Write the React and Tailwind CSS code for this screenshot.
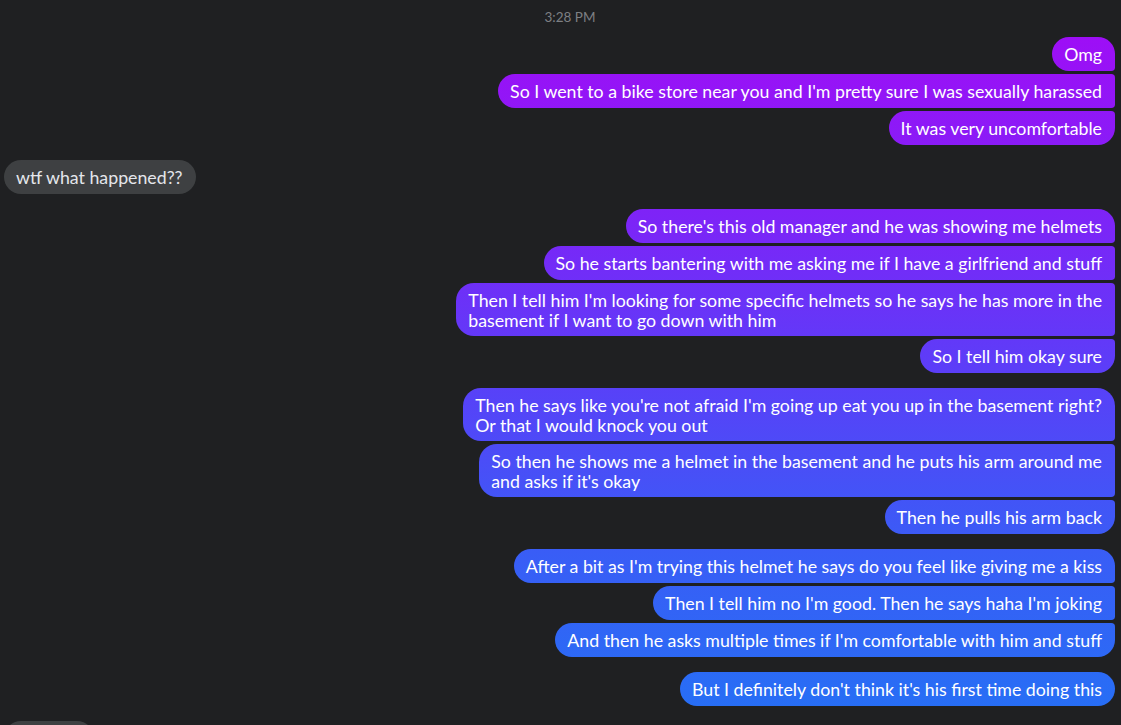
const groups = [
  {
    side: "me",
    items: [["Omg"], ["So I went to a bike store near you and I'm pretty sure I was sexually harassed"], ["It was very uncomfortable"]],
  },
  { side: "them", items: [["wtf what happened??"]] },
  {
    side: "me",
    items: [
      ["So there's this old manager and he was showing me helmets"],
      ["So he starts bantering with me asking me if I have a girlfriend and stuff"],
      ["Then I tell him I'm looking for some specific helmets so he says he has more in the", "basement if I want to go down with him"],
      ["So I tell him okay sure"],
    ],
  },
  {
    side: "me",
    items: [
      ["Then he says like you're not afraid I'm going up eat you up in the basement right?", "Or that I would knock you out"],
      ["So then he shows me a helmet in the basement and he puts his arm around me", "and asks if it's okay"],
      ["Then he pulls his arm back"],
    ],
  },
  {
    side: "me",
    items: [
      ["After a bit as I'm trying this helmet he says do you feel like giving me a kiss"],
      ["Then I tell him no I'm good. Then he says haha I'm joking"],
      ["And then he asks multiple times if I'm comfortable with him and stuff"],
    ],
  },
  { side: "me", items: [["But I definitely don't think it's his first time doing this"]] },
];

// corner shape depends on where the bubble sits in its group
function cornerClass(side, i, n) {
  if (n === 1) return "rounded-[18px]";
  if (side === "me") {
    if (i === 0) return "rounded-[18px] rounded-br-[4px]";
    if (i === n - 1) return "rounded-[18px] rounded-tr-[4px]";
    return "rounded-[18px] rounded-r-[4px]";
  }
  if (i === 0) return "rounded-[18px] rounded-bl-[4px]";
  if (i === n - 1) return "rounded-[18px] rounded-tl-[4px]";
  return "rounded-[18px] rounded-l-[4px]";
}

function Bubble({ side, lines, corner }) {
  const mine = side === "me";
  return (
    <div
      className={`${corner} whitespace-nowrap pl-3 pr-[13px] text-[17.75px] leading-[20px] ${
        lines.length > 1 ? "py-[6.5px]" : "py-[7px]"
      } ${
        mine
          ? "bg-[linear-gradient(to_bottom,#a40af6_0%,#7d24f7_30%,#5a3ff8_52%,#3a5cf6_75%,#2570f5_100%)] bg-fixed text-white"
          : "bg-[#3e4042] text-[#e4e6eb]"
      }`}
    >
      {lines.map((l, k) => (
        <div key={k}>{l}</div>
      ))}
    </div>
  );
}

export default function App() {
  return (
    <div className="h-screen overflow-hidden bg-[#1f2022] font-['Lato',sans-serif]">
      <div className="flex h-[37px] justify-center pl-[19px] pt-[8px] text-[13.5px] leading-[18px] text-[#7d7f83]">
        3:28 PM
      </div>

      <div className="flex flex-col gap-[15px] pl-[4px] pr-[6px]">
        {groups.map((g, gi) => (
          <div key={gi} className={`flex flex-col gap-[3px] ${g.side === "me" ? "items-end" : "items-start"}`}>
            {g.items.map((lines, i) => (
              <Bubble key={i} side={g.side} lines={lines} corner={cornerClass(g.side, i, g.items.length)} />
            ))}
          </div>
        ))}
        <div className="flex flex-col items-start">
          <div className="h-[34px] w-[90px] rounded-[18px] bg-[#3e4042]" />
        </div>
      </div>
    </div>
  );
}
